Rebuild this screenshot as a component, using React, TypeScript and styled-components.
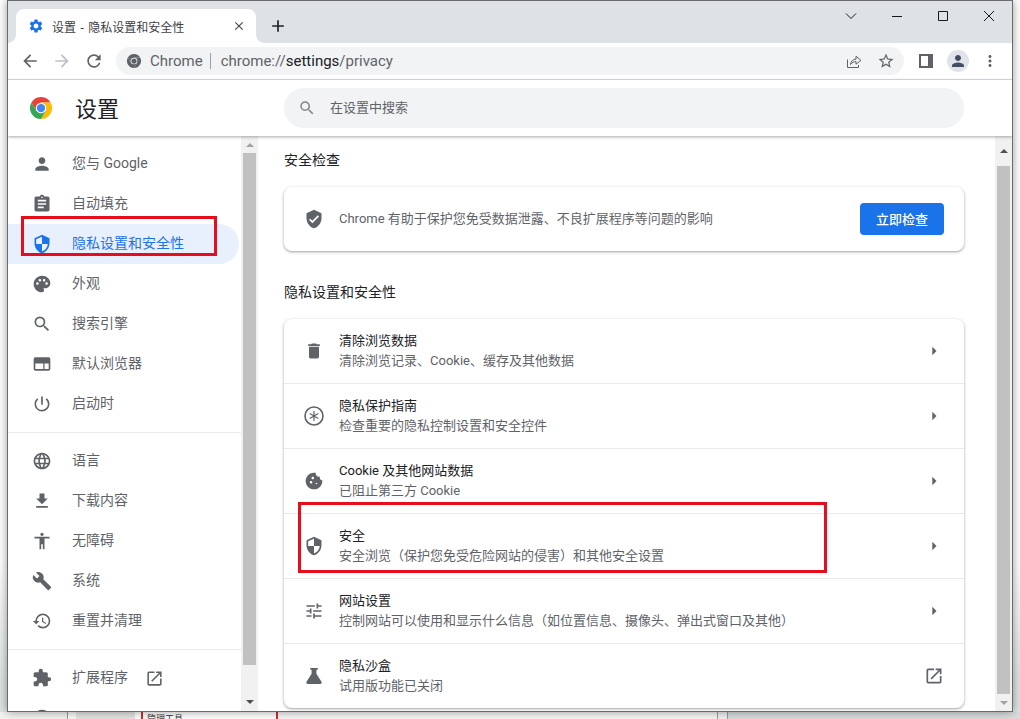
import React from 'react';
import styled, { createGlobalStyle } from 'styled-components';
import {
  MdPerson, MdAssignment, MdSecurity, MdPalette, MdSearch, MdPowerSettingsNew, MdLanguage, MdFileDownload,
  MdAccessibility, MdBuild, MdHistory, MdExtension, MdOpenInNew, MdDelete, MdVerifiedUser, MdCookie, MdTune,
  MdArrowRight, MdSettings, MdClose, MdAdd, MdArrowBack, MdArrowForward, MdRefresh, MdStarBorder, MdMoreVert,
} from 'react-icons/md';

const FONT = 'Roboto, "Noto Sans CJK SC", "Liberation Sans", sans-serif';

const Global = createGlobalStyle`
  html, body { margin: 0; padding: 0; width: 1020px; height: 719px; overflow: hidden; background: #fff; }
  * { box-sizing: border-box; }
  body { font-family: ${FONT}; }
`;

const Desktop = styled.div`
  position: relative; width: 1020px; height: 719px; overflow: hidden;
  background: linear-gradient(to bottom, #ffffff 0, #ffffff 560px, #dfe3e3 680px);
`;
const BehindStrip = styled.div`
  position: absolute; left: 0; top: 712px; width: 1020px; height: 7px; display: flex; background: #fff; overflow: hidden;
`;
const BehindCell = styled.div<{ $w: number; $bg: string; $line?: string; $lineLeft?: string }>`
  width: ${p => p.$w}px; flex: none; background: ${p => p.$bg};
  border-right: ${p => (p.$line ? p.$line : 'none')};
  border-left: ${p => (p.$lineLeft ? p.$lineLeft : 'none')};
  font-size: 9px; line-height: 14px; color: #333; padding-left: 4px; overflow: hidden; white-space: nowrap;
`;
const Window = styled.div`
  position: absolute; left: 7px; top: 0; width: 1006px; height: 712px; display: flex; flex-direction: column;
  background: #fff; border: 1px solid #6b6b6b; box-shadow: 0 0 9px rgba(0, 0, 0, 0.4); overflow: hidden;
`;
const TabStrip = styled.div`
  height: 42px; flex: none; background: #dee1e6; display: flex; align-items: flex-end; padding-left: 8px; position: relative;
`;
const Tab = styled.div`
  position: relative; width: 240px; height: 34px; background: #fff; border-radius: 8px 8px 0 0;
  display: flex; align-items: center; padding: 0 10px 0 12px; font-size: 12px; color: #3c4043;
  &::before, &::after { content: ''; position: absolute; bottom: 0; width: 8px; height: 8px; }
  &::before { left: -8px; background: radial-gradient(circle at 0 0, #dee1e6 7.5px, #fff 8px); }
  &::after { right: -8px; background: radial-gradient(circle at 100% 0, #dee1e6 7.5px, #fff 8px); }
`;
const TabTitle = styled.span`
  margin-left: 8px; flex: 1; white-space: nowrap; word-spacing: 1.5px;
`;
const NewTab = styled.div`
  margin-left: 12px; height: 34px; width: 20px; display: flex; align-items: center; justify-content: center; color: #202124;
`;
const WinControls = styled.div`
  margin-left: auto; align-self: flex-start; display: flex; height: 30px; align-items: center;
`;
const WinButton = styled.div`
  width: 46px; height: 30px; display: flex; align-items: center; justify-content: center; color: #1a1a1a;
`;
const Toolbar = styled.div`
  height: 37px; flex: none; background: #fff; border-bottom: 1px solid #dadce0; display: flex; align-items: center;
  padding: 0 0 1px 6px;
`;
const NavBtn = styled.div<{ $off?: boolean }>`
  width: 32px; height: 28px; display: flex; align-items: center; justify-content: center; color: ${p => (p.$off ? '#bdc1c6' : '#5f6368')};
`;
const Omnibox = styled.div`
  margin-left: 6px; width: 788px; height: 28px; border-radius: 14px; background: #f1f3f4; display: flex; align-items: center;
  padding: 0 2px 0 11px; font-size: 15px; color: #5f6368;
`;
const SiteGlyph = styled.span`
  width: 14px; height: 14px; display: flex; flex: none;
`;
const SiteChip = styled.span`
  margin-left: 9px; padding-right: 7px; border-right: 1px solid #9aa0a6; line-height: 16px;
`;
const Url = styled.span`
  margin-left: 10px; flex: 1;
  b { font-weight: 400; color: #202124; }
`;
const OmniIcon = styled.div`
  width: 32px; height: 28px; display: flex; align-items: center; justify-content: center; color: #5f6368;
`;
const ToolIcons = styled.div`
  display: flex; align-items: center; margin-left: 6px;
`;
const ToolIcon = styled.div`
  width: 32px; height: 28px; display: flex; align-items: center; justify-content: center; color: #5f6368;
`;
const Avatar = styled.div`
  width: 22px; height: 22px; border-radius: 50%; background: #e0e3e9; color: #444e62; display: flex; align-items: center; justify-content: center;
`;
const SideIcon = styled.div`
  width: 14px; height: 14px; background: #5f6368; padding: 2px 5px 2px 2px;
  &::after { content: ''; display: block; width: 100%; height: 100%; background: #fff; }
`;
const Header = styled.header`
  height: 56px; flex: none; background: #fff; display: flex; align-items: center; position: relative; z-index: 2;
  box-shadow: 0 1px 3px rgba(60, 64, 67, 0.45);
`;
const LogoBox = styled.div`
  width: 22px; height: 22px; margin-left: 22px; flex: none; display: flex;
`;
const Title = styled.h1`
  margin: -2px 1px 0 23px; width: 208px; font-size: 22px; font-weight: 400; color: #202124;
`;
const SearchBox = styled.div`
  width: 680px; height: 40px; border-radius: 20px; background: #f1f3f4; display: flex; align-items: center; padding-left: 14px;
  font-size: 13px; color: #5f6368; gap: 14px;
`;
const SearchHint = styled.span`
  margin-top: -3px;
`;
const Body = styled.div`
  flex: 1; min-height: 0; display: flex;
`;
const Sidebar = styled.nav`
  width: 233px; flex: none; padding-top: 8px; overflow: hidden; background: #fff;
`;
const NavRow = styled.div<{ $active?: boolean }>`
  height: 40px; width: 231px; display: flex; align-items: center; padding-left: 24px; font-size: 14px;
  color: ${p => (p.$active ? '#1a73e8' : '#5f6368')}; border-radius: 0 20px 20px 0;
  background: ${p => (p.$active ? '#e8f0fe' : 'transparent')};
`;
const NavIcon = styled.div`
  width: 20px; height: 20px; display: flex; margin-right: 20px; flex: none;
`;
const NavLabel = styled.span`
  white-space: nowrap; font-size: 14px; margin-top: -5px;
`;
const NavExternal = styled.div`
  margin-left: 17px; display: flex;
`;
const NavDivider = styled.div`
  height: 1px; background: #e8eaed; margin: 8px 0;
`;
const Scrollbar = styled.div`
  width: 17px; flex: none; background: #f1f1f1; display: flex; flex-direction: column; align-items: center;
`;
const Arrow = styled.div<{ $down?: boolean; $dim?: boolean; $h: number }>`
  height: ${p => p.$h}px; flex: none; display: flex; align-items: center; justify-content: center;
  &::after {
    content: ''; width: 0; height: 0; border-left: 4px solid transparent; border-right: 4px solid transparent;
    ${p => (p.$down ? 'border-top' : 'border-bottom')}: 4px solid ${p => (p.$dim ? '#a3a3a3' : '#505050')};
  }
`;
const Thumb = styled.div<{ $h: number }>`
  width: 13px; height: ${p => p.$h}px; flex: none; background: #c1c1c1;
`;
const Spacer = styled.div`
  flex: 1;
`;
const Main = styled.main`
  flex: 1; min-width: 0; padding: 15px 0 0 26px; overflow: hidden; background: #fff;
`;
const SectionTitle = styled.h2<{ $gap: number }>`
  margin: 0; height: 19px; line-height: 19px; font-size: 14px; font-weight: 400; color: #202124; margin-top: ${p => p.$gap}px;
`;
const Card = styled.section`
  width: 680px; margin-top: 17px; background: #fff; border-radius: 8px;
  box-shadow: 0 1px 2px rgba(60, 64, 67, 0.3), 0 1px 3px 1px rgba(60, 64, 67, 0.15);
`;
const CheckRow = styled.div`
  height: 64px; display: flex; align-items: center; padding: 0 20px; font-size: 13px; color: #5f6368;
`;
const RowIcon = styled.div`
  width: 20px; height: 20px; display: flex; margin-right: 15px; flex: none; color: #5f6368;
`;
const CheckText = styled.span`
  flex: 1; margin-top: -4px;
`;
const CheckButton = styled.button`
  width: 84px; height: 32px; border: none; border-radius: 4px; background: #1a73e8; color: #fff; font: 500 13px ${FONT}; padding: 0 0 2px;
`;
const Row = styled.div`
  height: 65px; display: flex; align-items: center; padding: 0 20px; border-top: 1px solid #e8eaed;
  &:first-child { border-top: none; height: 64px; }
`;
const RowText = styled.div`
  flex: 1; min-width: 0; margin-top: -1px;
`;
const RowTitle = styled.div`
  font-size: 13px; line-height: 20px; color: #202124;
`;
const RowSub = styled.div`
  font-size: 13px; line-height: 20px; color: #5f6368;
`;
const RowEnd = styled.div`
  width: 20px; height: 20px; display: flex; color: #5f6368;
`;
const Highlight = styled.div<{ $l: number; $t: number; $w: number; $h: number }>`
  position: absolute; left: ${p => p.$l}px; top: ${p => p.$t}px; width: ${p => p.$w}px; height: ${p => p.$h}px;
  border: 3px solid #e60d1c; z-index: 5; pointer-events: none;
`;

function ChromeLogo({ mono }: { mono?: boolean }) {
  const r = mono ? '#5f6368' : '#ea4335';
  const y = mono ? '#5f6368' : '#fbbc04';
  const g = mono ? '#5f6368' : '#34a853';
  const b = mono ? '#5f6368' : '#4285f4';
  return (
    <svg width="100%" height="100%" viewBox="0 0 24 24">
      <path d="M12 6H22.4A12 12 0 0 0 1.6 6L6.8 15Z" fill={r} />
      <path d="M22.4 6A12 12 0 0 1 12 24L17.2 15 12 6Z" fill={y} />
      <path d="M12 24A12 12 0 0 1 1.6 6L6.8 15H17.2Z" fill={g} />
      <circle cx="12" cy="12" r="5.7" fill="#fff" />
      <circle cx="12" cy="12" r="4.5" fill={b} />
    </svg>
  );
}

function WebIcon() {
  return (
    <svg width="20" height="20" viewBox="0 0 24 24" fill="currentColor">
      <path fillRule="evenodd" d="M4 4h16a2 2 0 0 1 2 2v12a2 2 0 0 1-2 2H4a2 2 0 0 1-2-2V6a2 2 0 0 1 2-2zm0 7.5V18h9.5v-6.5H4zm11 0V18h5v-6.5h-5z" />
    </svg>
  );
}
function PrivacyGuideIcon() {
  return (
    <svg width="20" height="20" viewBox="0 0 20 20" fill="none" stroke="currentColor">
      <circle cx="10" cy="10" r="9" strokeWidth="1.6" />
      <path d="M10 5v10M5.7 7.5l8.6 5M14.3 7.5l-8.6 5" strokeWidth="1.2" />
    </svg>
  );
}
function FlaskIcon() {
  return (
    <svg width="20" height="20" viewBox="0 0 24 24" fill="currentColor">
      <path d="M7.5 2.5h9V4.4h-1.6v5L21 19a1.8 1.8 0 0 1-1.5 2.7h-15A1.8 1.8 0 0 1 3 19l6.1-9.6v-5H7.5z" />
    </svg>
  );
}
function ShareIcon() {
  return (
    <svg width="16" height="16" viewBox="0 0 16 16" fill="none" stroke="currentColor" strokeWidth="1">
      <path d="M1.5 6.5V14.5H12.5V12" />
      <path d="M4.5 11.5C4.8 8 7.3 6.2 10 6.2V3.2L15 7.4 10 11.2V8.6C8 8.5 6 9.6 4.5 11.5Z" />
    </svg>
  );
}
function AboutGlyph() {
  return (
    <svg width="20" height="20" viewBox="0 0 24 24" fill="currentColor"><circle cx="12" cy="12" r="10" /></svg>
  );
}

const navTop = [
  { icon: <MdPerson size={20} />, label: '您与 Google' },
  { icon: <MdAssignment size={20} />, label: '自动填充' },
  { icon: <MdSecurity size={20} />, label: '隐私设置和安全性', active: true },
  { icon: <MdPalette size={20} />, label: '外观' },
  { icon: <MdSearch size={20} />, label: '搜索引擎' },
  { icon: <WebIcon />, label: '默认浏览器' },
  { icon: <MdPowerSettingsNew size={20} />, label: '启动时' },
];
const navMid = [
  { icon: <MdLanguage size={20} />, label: '语言' },
  { icon: <MdFileDownload size={20} />, label: '下载内容' },
  { icon: <MdAccessibility size={20} />, label: '无障碍' },
  { icon: <MdBuild size={20} />, label: '系统' },
  { icon: <MdHistory size={20} />, label: '重置并清理' },
];
const rows = [
  { icon: <MdDelete size={20} />, title: '清除浏览数据', sub: '清除浏览记录、Cookie、缓存及其他数据' },
  { icon: <PrivacyGuideIcon />, title: '隐私保护指南', sub: '检查重要的隐私控制设置和安全控件' },
  { icon: <MdCookie size={20} />, title: 'Cookie 及其他网站数据', sub: '已阻止第三方 Cookie' },
  { icon: <MdSecurity size={20} />, title: '安全', sub: '安全浏览（保护您免受危险网站的侵害）和其他安全设置' },
  { icon: <MdTune size={20} />, title: '网站设置', sub: '控制网站可以使用和显示什么信息（如位置信息、摄像头、弹出式窗口及其他）' },
  { icon: <FlaskIcon />, title: '隐私沙盒', sub: '试用版功能已关闭', external: true },
];

export default function App() {
  return (
    <Desktop>
      <Global />
      <BehindStrip>
        <BehindCell $w={68} $bg="#f3f3f3" $line="1px solid #9a9a9a" />
        <BehindCell $w={8} $bg="#fafafa" />
        <BehindCell $w={59} $bg="#e4e4e4" />
        <BehindCell $w={6} $bg="#fff" />
        <BehindCell $w={137} $bg="#fff" $lineLeft="2px solid #c9302c" $line="2px solid #c9302c">
          管理工具
        </BehindCell>
        <BehindCell $w={440} $bg="#f7f7f7" $line="1px solid #9a9a9a" />
        <BehindCell $w={10} $bg="#f2f2f2" $line="1px solid #9a9a9a" />
        <BehindCell $w={292} $bg="#d9dddd" />
      </BehindStrip>
      <Window>
        <TabStrip>
          <Tab>
            <MdSettings size={16} color="#1a73e8" />
            <TabTitle>设置 - 隐私设置和安全性</TabTitle>
            <MdClose size={14} color="#45494d" />
          </Tab>
          <NewTab><MdAdd size={20} /></NewTab>
          <WinControls>
            <WinButton>
              <svg width="12" height="12" viewBox="0 0 12 12" fill="none" stroke="currentColor"><path d="M1 3.5l5 5 5-5" /></svg>
            </WinButton>
            <WinButton>
              <svg width="12" height="12" viewBox="0 0 12 12" fill="none" stroke="currentColor"><path d="M1 6.5h10" /></svg>
            </WinButton>
            <WinButton>
              <svg width="12" height="12" viewBox="0 0 12 12" fill="none" stroke="currentColor"><path d="M1.5 1.5h9v9h-9z" /></svg>
            </WinButton>
            <WinButton>
              <svg width="12" height="12" viewBox="0 0 12 12" fill="none" stroke="currentColor"><path d="M1 1l10 10M11 1L1 11" /></svg>
            </WinButton>
          </WinControls>
        </TabStrip>
        <Toolbar>
          <NavBtn><MdArrowBack size={20} /></NavBtn>
          <NavBtn $off><MdArrowForward size={20} /></NavBtn>
          <NavBtn><MdRefresh size={20} /></NavBtn>
          <Omnibox>
            <SiteGlyph><ChromeLogo mono /></SiteGlyph>
            <SiteChip>Chrome</SiteChip>
            <Url>chrome://<b>settings</b>/privacy</Url>
            <OmniIcon><ShareIcon /></OmniIcon>
            <OmniIcon><MdStarBorder size={18} /></OmniIcon>
          </Omnibox>
          <ToolIcons>
            <ToolIcon><SideIcon /></ToolIcon>
            <ToolIcon><Avatar><MdPerson size={18} /></Avatar></ToolIcon>
            <ToolIcon><MdMoreVert size={18} /></ToolIcon>
          </ToolIcons>
        </Toolbar>
        <Header>
          <LogoBox><ChromeLogo /></LogoBox>
          <Title>设置</Title>
          <SearchBox>
            <MdSearch size={18} color="#80868b" />
            <SearchHint>在设置中搜索</SearchHint>
          </SearchBox>
        </Header>
        <Body>
          <Sidebar>
            {navTop.map(n => (
              <NavRow key={n.label} $active={n.active}>
                <NavIcon>{n.icon}</NavIcon>
                <NavLabel>{n.label}</NavLabel>
              </NavRow>
            ))}
            <NavDivider />
            {navMid.map(n => (
              <NavRow key={n.label}>
                <NavIcon>{n.icon}</NavIcon>
                <NavLabel>{n.label}</NavLabel>
              </NavRow>
            ))}
            <NavDivider />
            <NavRow>
              <NavIcon><MdExtension size={20} /></NavIcon>
              <NavLabel>扩展程序</NavLabel>
              <NavExternal><MdOpenInNew size={19} /></NavExternal>
            </NavRow>
            <NavRow>
              <NavIcon><AboutGlyph /></NavIcon>
            </NavRow>
          </Sidebar>
          <Scrollbar>
            <Arrow $h={17} $dim />
            <Thumb $h={512} />
            <Spacer />
            <Arrow $h={18} $down />
          </Scrollbar>
          <Main>
            <SectionTitle $gap={0}>安全检查</SectionTitle>
            <Card>
              <CheckRow>
                <RowIcon><MdVerifiedUser size={20} /></RowIcon>
                <CheckText>Chrome 有助于保护您免受数据泄露、不良扩展程序等问题的影响</CheckText>
                <CheckButton>立即检查</CheckButton>
              </CheckRow>
            </Card>
            <SectionTitle $gap={32}>隐私设置和安全性</SectionTitle>
            <Card>
              {rows.map(r => (
                <Row key={r.title}>
                  <RowIcon>{r.icon}</RowIcon>
                  <RowText>
                    <RowTitle>{r.title}</RowTitle>
                    <RowSub>{r.sub}</RowSub>
                  </RowText>
                  <RowEnd>{r.external ? <MdOpenInNew size={20} /> : <MdArrowRight size={20} />}</RowEnd>
                </Row>
              ))}
            </Card>
          </Main>
          <Scrollbar>
            <Arrow $h={30} />
            <Thumb $h={528} />
            <Spacer />
            <Arrow $h={18} $down $dim />
          </Scrollbar>
        </Body>
      </Window>
      <Highlight $l={21} $t={216} $w={196} $h={40} />
      <Highlight $l={298} $t={502} $w={529} $h={71} />
    </Desktop>
  );
}
